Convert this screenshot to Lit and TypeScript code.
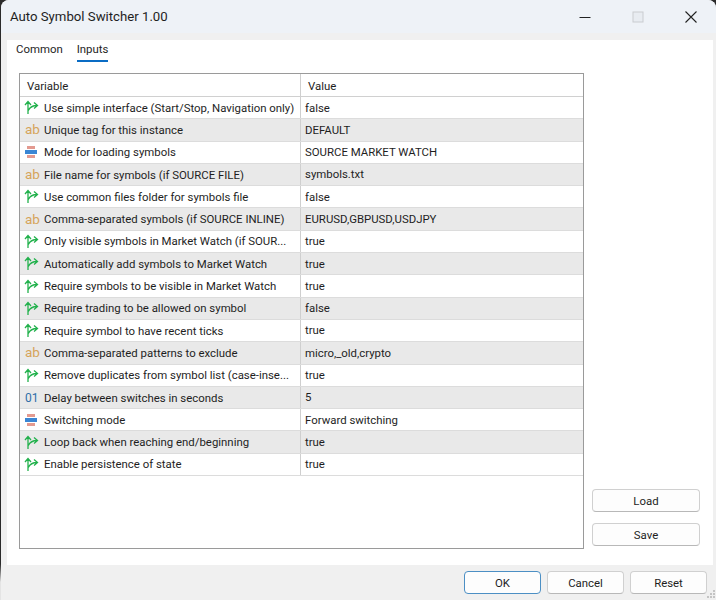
import { LitElement, html, css, svg } from 'lit'
import { customElement } from 'lit/decorators.js'

type Kind = 'bool' | 'ab' | 'enum' | 'num'

const ROWS: [Kind, string, string][] = [
  ['bool', 'Use simple interface (Start/Stop, Navigation only)', 'false'],
  ['ab', 'Unique tag for this instance', 'DEFAULT'],
  ['enum', 'Mode for loading symbols', 'SOURCE MARKET WATCH'],
  ['ab', 'File name for symbols (if SOURCE FILE)', 'symbols.txt'],
  ['bool', 'Use common files folder for symbols file', 'false'],
  ['ab', 'Comma-separated symbols (if SOURCE INLINE)', 'EURUSD,GBPUSD,USDJPY'],
  ['bool', 'Only visible symbols in Market Watch (if SOUR...', 'true'],
  ['bool', 'Automatically add symbols to Market Watch', 'true'],
  ['bool', 'Require symbols to be visible in Market Watch', 'true'],
  ['bool', 'Require trading to be allowed on symbol', 'false'],
  ['bool', 'Require symbol to have recent ticks', 'true'],
  ['ab', 'Comma-separated patterns to exclude', 'micro,_old,crypto'],
  ['bool', 'Remove duplicates from symbol list (case-inse...', 'true'],
  ['num', 'Delay between switches in seconds', '5'],
  ['enum', 'Switching mode', 'Forward switching'],
  ['bool', 'Loop back when reaching end/beginning', 'true'],
  ['bool', 'Enable persistence of state', 'true'],
]

const icon = (k: Kind) => {
  if (k === 'ab') return html`<span class="ic-ab">ab</span>`
  if (k === 'num') return html`<span class="ic-num">01</span>`
  if (k === 'enum')
    return html`<svg class="ic" width="16" height="14" viewBox="0 0 16 14">
      ${svg`<rect x="4" y="1" width="8" height="3" fill="#e39a90"/>
      <rect x="2" y="5" width="12" height="4" fill="#3a86d4"/>
      <rect x="4" y="10" width="8" height="3" fill="#e39a90"/>`}
    </svg>`
  return html`<svg class="ic" width="16" height="15" viewBox="0 0 16 15" fill="none" stroke="#22b14c" stroke-width="1.3">
    ${svg`<path d="M5 14 V2 M2 5 L5 1.5 L8 5 M5.3 10.5 C7 7 9 5.5 14 5.5 M11 2.5 L14.5 5.5 L11 8.5"/>`}
  </svg>`
}

@customElement('app-root')
export class AppRoot extends LitElement {
  render() {
    return html`
      <div class="win">
        <div class="title">
          <span class="name">Auto Symbol Switcher 1.00</span>
          <div class="ctrls">
            <svg width="12" height="12" viewBox="0 0 12 12"><path d="M0.5 6.5H11.5" stroke="#222" stroke-width="1.1"/></svg>
            <svg width="12" height="12" viewBox="0 0 12 12"><rect x="1" y="1" width="10" height="10" fill="#e8ecf1" stroke="#c9ccd0"/></svg>
            <svg width="12" height="12" viewBox="0 0 12 12"><path d="M0.5 0.5L11.5 11.5M11.5 0.5L0.5 11.5" stroke="#222" stroke-width="1.1"/></svg>
          </div>
        </div>
        <div class="body">
          <div class="panel">
            <div class="tabs">
              <span class="tab">Common</span>
              <span class="tab on">Inputs</span>
            </div>
            <div class="main">
              <div class="table">
                <div class="row head">
                  <div class="c1">Variable</div>
                  <div class="c2">Value</div>
                </div>
                ${ROWS.map(
                  ([k, a, b], i) => html`
                    <div class="row ${i % 2 ? 'alt' : ''}">
                      <div class="c1"><span class="slot">${icon(k)}</span>${a}</div>
                      <div class="c2">${b}</div>
                    </div>
                  `
                )}
              </div>
              <div class="side">
                <button class="btn">Load</button>
                <button class="btn">Save</button>
              </div>
            </div>
          </div>
          <div class="foot">
            <button class="btn def">OK</button>
            <button class="btn">Cancel</button>
            <button class="btn">Reset</button>
          </div>
          <svg class="grip" width="12" height="12" viewBox="0 0 12 12" fill="#c4c4c4">
            <rect x="9" y="2" width="2" height="2"/><rect x="6" y="5" width="2" height="2"/><rect x="9" y="5" width="2" height="2"/>
            <rect x="3" y="8" width="2" height="2"/><rect x="6" y="8" width="2" height="2"/><rect x="9" y="8" width="2" height="2"/>
          </svg>
        </div>
      </div>
    `
  }

  static styles = css`
    :host {
      display: block;
      width: 716px;
      height: 600px;
      background: linear-gradient(#2b2b2b 94%, #e4e4e4 97%);
      font-family: Roboto, 'Noto Sans', sans-serif;
      font-size: 11.4px;
      color: #1e1e1e;
    }
    .win {
      position: relative;
      height: 600px;
      margin-left: 1px;
      border-radius: 8px 8px 0 0;
      overflow: hidden;
      display: flex;
      flex-direction: column;
      background: #f0f0f0;
    }
    .title {
      height: 33px;
      flex: none;
      background: #eef2f7;
      display: flex;
      align-items: center;
      justify-content: space-between;
      padding: 0 19px 0 9px;
    }
    .name {
      font-size: 13.2px;
    }
    .ctrls {
      display: flex;
      gap: 41px;
      align-items: center;
    }
    .ctrls svg {
      display: block;
    }
    .body {
      flex: 1;
      display: flex;
      flex-direction: column;
      padding-top: 7px;
      position: relative;
    }
    .panel {
      flex: 1;
      margin: 0 3px 0 6px;
      background: #fff;
      display: flex;
      flex-direction: column;
    }
    .tabs {
      display: flex;
      gap: 14px;
      padding: 0 0 0 9px;
      height: 26px;
      box-sizing: border-box;
    }
    .tab {
      height: 22px;
      line-height: 19px;
      box-sizing: border-box;
    }
    .tab.on {
      border-bottom: 2px solid #0a6cc4;
    }
    .main {
      display: flex;
      padding: 7px 10px 0 12px;
      gap: 8px;
    }
    .table {
      width: 565px;
      height: 476px;
      box-sizing: border-box;
      border: 1px solid #9a9a9a;
      flex: none;
    }
    .row {
      display: flex;
      height: 22.3px;
      box-sizing: border-box;
      border-bottom: 1px solid #dcdcdc;
      line-height: 21px;
      white-space: nowrap;
    }
    .row.head {
      height: 23px;
      border-bottom: 1px solid #d0d0d0;
    }
    .row.alt {
      background: #e9e9e9;
    }
    .c1 {
      width: 281px;
      flex: none;
      box-sizing: border-box;
      border-right: 1px solid #cfcfcf;
      padding-top: 1px;
      display: flex;
      align-items: center;
    }
    .head .c1 {
      padding: 2px 0 0 7px;
    }
    .c2 {
      padding: 0.5px 0 0 4px;
    }
    .head .c2 {
      padding: 2px 0 0 7px;
    }
    .slot {
      width: 24px;
      padding-left: 3px;
      box-sizing: border-box;
      flex: none;
      display: flex;
      align-items: center;
      margin-top: -1px;
    }
    .ic {
      display: block;
    }
    .ic-ab {
      color: #d6a45a;
      font-size: 13.5px;
      line-height: 14px;
      margin: -1px 0 0 2px;
    }
    .ic-num {
      color: #2f6ea8;
      font-size: 12px;
      line-height: 14px;
      margin-left: 2px;
    }
    .side {
      width: 108px;
      flex: none;
      display: flex;
      flex-direction: column;
      justify-content: flex-end;
      gap: 11px;
      padding-bottom: 3px;
    }
    .btn {
      font: inherit;
      color: inherit;
      background: #fdfdfd;
      border: 1px solid #d0d0d0;
      border-bottom-color: #b8b8b8;
      border-radius: 4px;
      padding: 0;
      height: 23px;
    }
    .side .btn {
      width: 108px;
    }
    .foot {
      flex: none;
      height: 35px;
      box-sizing: border-box;
      padding: 6px 9px 0 0;
      display: flex;
      justify-content: flex-end;
      gap: 6px;
    }
    .foot .btn {
      width: 77px;
    }
    .btn.def {
      border: 1.5px solid #4c8fc4;
    }
    .grip {
      position: absolute;
      right: 0;
      bottom: 0;
    }
  `
}
